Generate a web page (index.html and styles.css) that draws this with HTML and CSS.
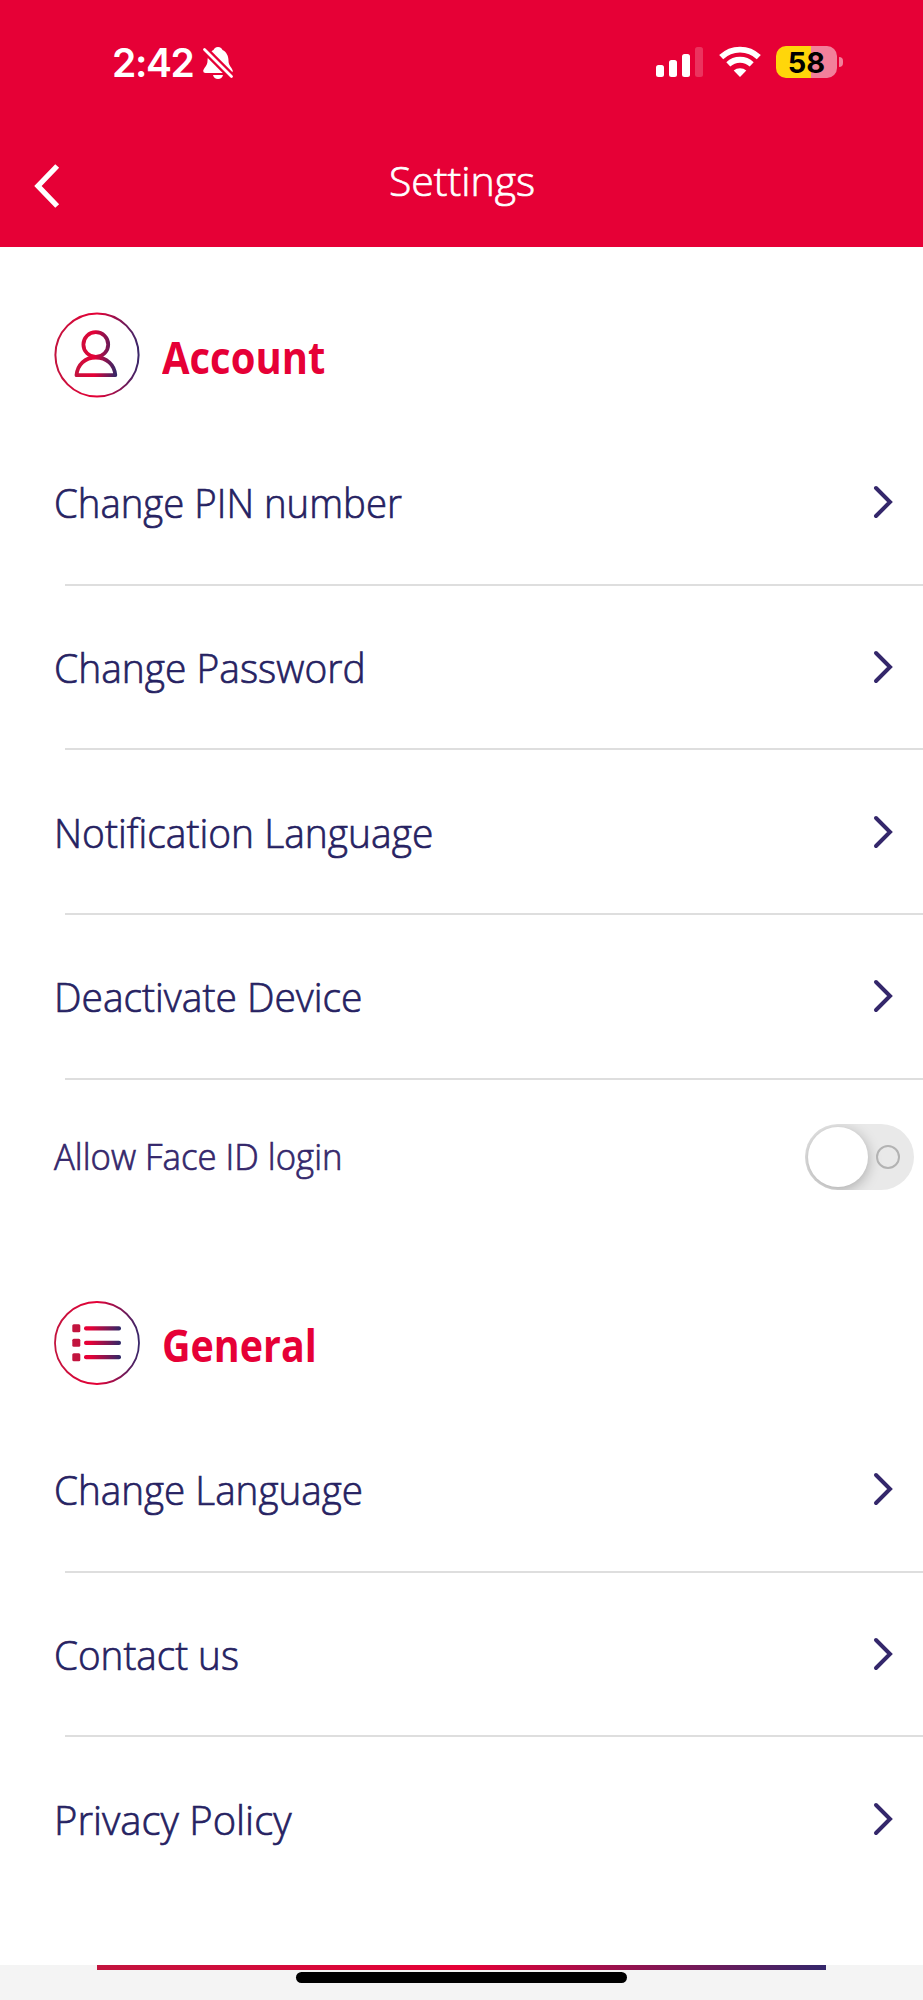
FILE: index.html
```html
<!DOCTYPE html>
<html lang="en">
<head>
    <meta charset="UTF-8">
    <meta name="viewport" content="width=device-width, initial-scale=1.0">
    <title>Settings</title>
    <link rel="stylesheet" href="styles.css">
</head>
<body>
    <!-- shared gradients and chevron -->
    <svg class="defs" width="0" height="0">
        <defs>
            <linearGradient id="ring" gradientUnits="userSpaceOnUse" x1="0" y1="0" x2="86" y2="0">
                <stop offset="0" stop-color="#c2143e"/>
                <stop offset="0.5" stop-color="#e60036"/>
                <stop offset="1" stop-color="#34276b"/>
            </linearGradient>
            <linearGradient id="person" gradientUnits="userSpaceOnUse" x1="21" y1="0" x2="63" y2="0">
                <stop offset="0" stop-color="#c2143e"/>
                <stop offset="0.45" stop-color="#e60036"/>
                <stop offset="1" stop-color="#2c2868"/>
            </linearGradient>
            <linearGradient id="line" gradientUnits="userSpaceOnUse" x1="31" y1="0" x2="67" y2="0">
                <stop offset="0.15" stop-color="#e60036"/>
                <stop offset="1" stop-color="#2c2868"/>
            </linearGradient>
            <symbol id="chevron" viewBox="0 0 20 34">
                <path d="M3 3 L17 17 L3 31" fill="none" stroke="#34276b" stroke-width="4" stroke-linecap="round" stroke-linejoin="miter"/>
            </symbol>
        </defs>
    </svg>

    <header class="header">
        <div class="status-bar">
            <div class="status-left">
                <span class="time">2:42</span>
                <svg class="bell" width="32" height="34" viewBox="0 0 32 34">
                    <path d="M16 1 C13.5 1 12 2.5 11.5 4 C7.5 6 5.5 10 5.5 15 C5.5 20 1.5 22 1.2 25 Q1.2 27 3.5 27 H28.5 Q30.8 27 30.8 25 C30.5 22 26.5 20 26.5 15 C26.5 10 24.5 6 20.5 4 C20 2.5 18.5 1 16 1 Z" fill="#fff"/>
                    <path d="M11 29 H21 Q20 33 16 33 Q12 33 11 29 Z" fill="#fff"/>
                    <path d="M1 2 L31 32" stroke="#e60036" stroke-width="7.5"/>
                    <path d="M2.5 3.5 L29.5 30.5" stroke="#fff" stroke-width="2.8" stroke-linecap="round"/>
                </svg>
            </div>
            <div class="status-right">
                <svg width="48" height="32" viewBox="0 0 48 32">
                    <rect x="0" y="19" width="8" height="12" rx="2.5" fill="#fff"/>
                    <rect x="13" y="14" width="8" height="17" rx="2.5" fill="#fff"/>
                    <rect x="26" y="8" width="8" height="23" rx="2.5" fill="#fff"/>
                    <rect x="39" y="1" width="8" height="30" rx="2.5" fill="#fff" opacity="0.2"/>
                </svg>
                <svg class="wifi" width="42" height="32" viewBox="0 0 42 32">
                    <path d="M2.2 11.2 A27 27 0 0 1 39.8 11.2" fill="none" stroke="#fff" stroke-width="5.8"/>
                    <path d="M9.3 18.4 A17 17 0 0 1 32.7 18.4" fill="none" stroke="#fff" stroke-width="5.8"/>
                    <path d="M21 31 L14.7 24.6 A9.4 9.4 0 0 1 27.3 24.6 Z" fill="#fff"/>
                </svg>
                <div class="battery">58</div>
                <div class="battery-cap"></div>
            </div>
        </div>
        <div class="title-bar">
            <svg class="back" width="28" height="46" viewBox="0 0 28 46">
                <path d="M24.2 3 L5 23 L24.2 43" fill="none" stroke="#fff" stroke-width="5.4"/>
            </svg>
            <h1 class="title">Settings</h1>
        </div>
    </header>

    <main class="content">
        <section class="section account">
            <div class="section-head">
                <svg width="86" height="86" viewBox="0 0 86 86">
                    <circle cx="43" cy="43" r="41.6" fill="none" stroke="url(#ring)" stroke-width="2"/>
                    <g fill="none" stroke="url(#person)" stroke-width="3.8">
                        <circle cx="41.8" cy="32.5" r="12.4"/>
                        <path d="M22.5 63.2 C23.5 52.5 31 45.5 41.8 45.5 C52.5 45.5 60.5 52.5 61.3 63.2 Z" stroke-linejoin="round"/>
                    </g>
                </svg>
                <h2 class="account-title">Account</h2>
            </div>
            <a class="row"><span class="label pin">Change PIN number</span><svg class="chevron"><use href="#chevron"/></svg></a>
            <a class="row"><span class="label">Change Password</span><svg class="chevron"><use href="#chevron"/></svg></a>
            <a class="row"><span class="label">Notification Language</span><svg class="chevron"><use href="#chevron"/></svg></a>
            <a class="row"><span class="label">Deactivate Device</span><svg class="chevron"><use href="#chevron"/></svg></a>
            <div class="face-row">
                <span class="label face">Allow Face ID login</span>
                <div class="toggle">
                    <div class="knob"></div>
                    <div class="off-mark"></div>
                </div>
            </div>
        </section>

        <section class="section general">
            <div class="section-head">
                <svg width="86" height="86" viewBox="0 0 86 86">
                    <ellipse cx="43" cy="43" rx="42" ry="41" fill="none" stroke="url(#ring)" stroke-width="1.8"/>
                    <g fill="#c2143e">
                        <rect x="18.3" y="24.3" width="8" height="8" rx="1.5"/>
                        <rect x="18.3" y="38.8" width="8" height="8" rx="1.5"/>
                        <rect x="18.3" y="53.2" width="8" height="8" rx="1.5"/>
                    </g>
                    <g fill="url(#line)">
                        <rect x="30" y="26.2" width="37" height="4.2" rx="2"/>
                        <rect x="30" y="40.7" width="37" height="4.2" rx="2"/>
                        <rect x="30" y="55.1" width="37" height="4.2" rx="2"/>
                    </g>
                </svg>
                <h2 class="general-title">General</h2>
            </div>
            <a class="row"><span class="label language">Change Language</span><svg class="chevron"><use href="#chevron"/></svg></a>
            <a class="row"><span class="label contact">Contact us</span><svg class="chevron"><use href="#chevron"/></svg></a>
            <a class="row"><span class="label privacy">Privacy Policy</span><svg class="chevron"><use href="#chevron"/></svg></a>
        </section>
    </main>

    <footer class="footer">
        <div class="footer-line"></div>
        <div class="home-indicator"></div>
    </footer>
</body>
</html>
```

FILE: styles.css
```css
* {
    box-sizing: border-box;
}
body {
    margin: 0;
    height: 2000px;
    display: flex;
    flex-direction: column;
    background: #fff;
    color: #262262;
    font-family: 'Open Sans', 'Noto Sans', sans-serif;
    overflow: hidden;
}
.defs {
    position: absolute;
}
svg {
    flex: none;
    display: block;
}
h1, h2 {
    margin: 0;
}
.header {
    height: 247px;
    flex: none;
    background: #e60036;
    color: #fff;
}
.status-bar {
    height: 124px;
    display: flex;
    justify-content: space-between;
    padding: 46px 80px 0 112px;
}
.status-left, .status-right {
    display: flex;
    align-items: flex-start;
    height: 34px;
}
.time {
    width: 82px;
    font-family: Inter, sans-serif;
    font-size: 39px;
    font-weight: 600;
    letter-spacing: -1.4px;
    line-height: 34px;
    white-space: nowrap;
}
.bell {
    margin-left: 8px;
}
.wifi {
    margin-left: 15px;
}
.battery {
    width: 61px;
    height: 32px;
    margin-left: 15px;
    border-radius: 10px;
    background: linear-gradient(90deg, #ffd60a 35px, #f2809b 35px);
    color: #000;
    font-family: Inter, sans-serif;
    font-size: 29px;
    font-weight: 700;
    line-height: 33px;
    text-align: center;
}
.battery-cap {
    width: 4px;
    height: 10px;
    margin: 11px 0 0 2px;
    border-radius: 0 4px 4px 0;
    background: #f2809b;
}
.title-bar {
    height: 123px;
    display: flex;
    padding: 39px 32px 0 33px;
}
.title {
    flex: 1;
    margin: 0 28px 0 0;
    font-size: 41px;
    font-weight: 300;
    line-height: 34px;
    text-align: center;
    -webkit-text-stroke: 0.7px;
}
.section-head {
    display: flex;
    align-items: center;
    gap: 22px;
    height: 86px;
    padding-left: 54px;
}
.section-head h2 {
    padding-top: 4px;
    color: #e60036;
    font-size: 45px;
    font-weight: 700;
    line-height: 50px;
    transform: scaleX(0.888);
    transform-origin: left;
}
.section-head .general-title {
    transform: scaleX(0.876);
}
.account {
    height: 988px;
    padding-top: 65px;
}
.account .section-head {
    margin-bottom: 22px;
}
.general {
    padding-top: 65px;
}
.general .section-head {
    margin-bottom: 21px;
}
.row {
    position: relative;
    display: flex;
    align-items: center;
    justify-content: space-between;
    height: 164.7px;
    padding: 0 30px 0 54px;
    font-size: 41px;
    font-weight: 300;
    white-space: nowrap;
}
.row:not(:last-child)::after {
    content: '';
    position: absolute;
    left: 65px;
    right: 0;
    bottom: -1px;
    height: 2px;
    background: #dedede;
}
/* slightly narrowed lettering */
.label {
    transform: scaleX(0.95);
    transform-origin: left;
    -webkit-text-stroke: 0.7px;
}
.pin {
    transform: scaleX(0.935);
}
.face {
    transform: scaleX(0.965);
}
.language, .contact {
    transform: scaleX(0.942);
}
.privacy {
    transform: scaleX(0.975);
}
.chevron {
    width: 20px;
    height: 34px;
}
.face-row {
    display: flex;
    align-items: center;
    justify-content: space-between;
    height: 156px;
    padding: 0 9px 0 54px;
    color: #34276b;
    font-size: 36px;
    font-weight: 300;
}
.toggle {
    display: flex;
    align-items: center;
    width: 109px;
    height: 66px;
    padding-left: 3px;
    border-radius: 33px;
    background: #e9e9e9;
    overflow: hidden;
}
.knob {
    width: 60px;
    height: 60px;
    border-radius: 50%;
    background: #fff;
    box-shadow: 0 3px 14px rgba(0, 0, 0, 0.28);
}
.off-mark {
    width: 24px;
    height: 24px;
    margin-left: 8px;
    border: 2px solid #b3b3b3;
    border-radius: 50%;
}
.footer {
    height: 35px;
    flex: none;
    margin-top: auto;
    background: #f4f4f4;
}
.footer-line {
    width: 729px;
    height: 5px;
    margin-left: 97px;
    background: linear-gradient(90deg, #c2143e, #e60036 50%, #34276b);
}
.home-indicator {
    width: 331px;
    height: 11px;
    margin: 2px auto 0;
    border-radius: 6px;
    background: #000;
}
```
